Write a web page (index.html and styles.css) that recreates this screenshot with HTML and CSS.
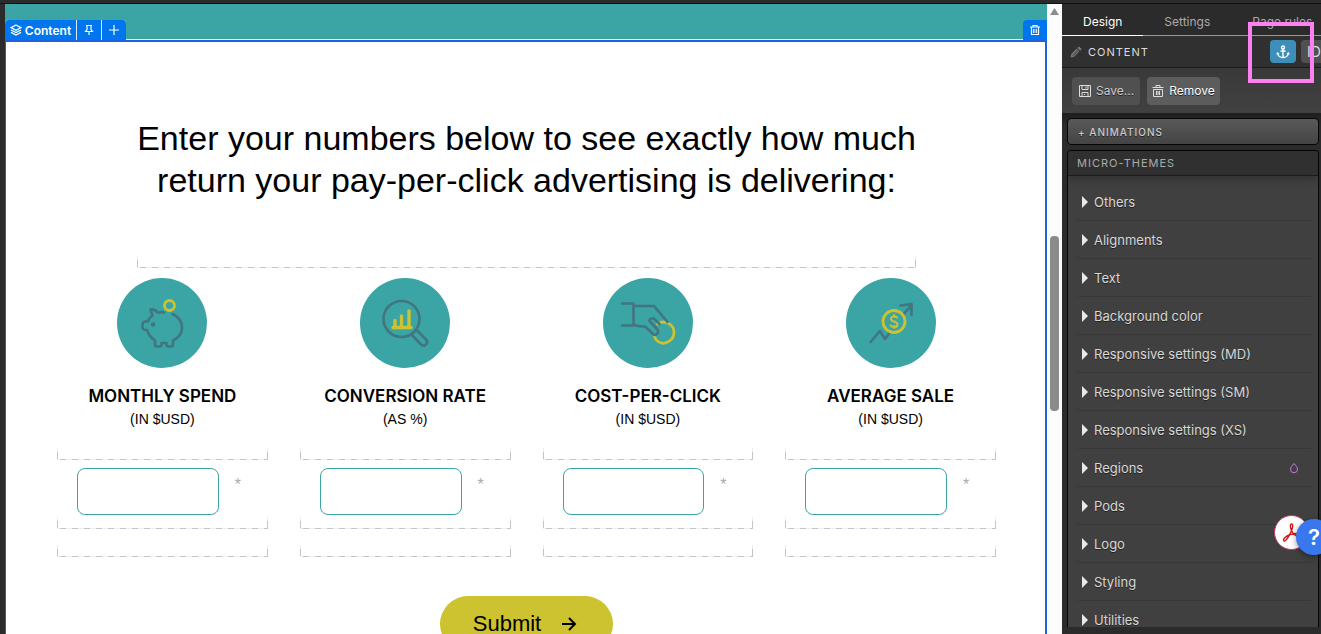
FILE: index.html
```html
<!DOCTYPE html>
<html lang="en">
<head>
    <meta charset="UTF-8">
    <meta name="viewport" content="width=device-width, initial-scale=1.0">
    <title>Page Editor</title>
    <link rel="stylesheet" href="styles.css">
</head>
<body>

<div class="topbar"></div>
<div class="editor">
    <main class="canvas">
        <div class="hero">
            <div class="block-tools">
                <button class="tool tool-name">
                    <svg width="12" height="12" viewBox="0 0 12 12"><path d="M6 1 11 3.600 6 6.200 1 3.600ZM1 6l5 2.600L11 6M1 8.400 6 11l5-2.600"/></svg>
                    Content
                </button>
                <button class="tool" aria-label="Pin">
                    <svg width="12" height="12" viewBox="0 0 12 12"><path d="M3 1.500h6M4 1.500v4L2.500 7.500h7L8 5.500v-4M6 7.500V11"/></svg>
                </button>
                <button class="tool" aria-label="Add">
                    <svg width="12" height="12" viewBox="0 0 12 12"><path d="M6 1v10M1 6h10"/></svg>
                </button>
            </div>
            <button class="tool tool-delete" aria-label="Delete">
                <svg width="12" height="12" viewBox="0 0 12 12"><path d="M1 3h10M4 3V1.500h4V3M2.500 3v7.500h7V3M4.800 5v4M7.200 5v4"/></svg>
            </button>
        </div>

        <form class="content">
            <h1>Enter your numbers below to see exactly how much<br>return your pay-per-click advertising is delivering:</h1>
            <div class="drop drop-wide"></div>

            <div class="fields">
                <div class="field">
                    <svg class="badge" viewBox="0 0 90 90">
                        <circle cx="45" cy="45" r="45" fill="#3ba4a5"/>
                        <g class="line">
                            <path d="M47 34.500C43 33.500 41 35 40.500 34.500 38.500 31.500 36 31 33.500 31.500L35.500 37.500C32.500 39.500 31.500 41 31 43.500 27.500 43 25.500 43.500 25.500 46.500v3c0 2 2 2.500 4.500 2.500 1.500 4.500 4 8 8 10.500v4c0 1.500 0 2 1.500 2h3c1.500 0 2-.5 2-2V65h5v1.500c0 1.500.5 2 2 2h2.500c1.500 0 2-.5 2-2v-4C62 59.500 65 55 65 50c0-6-3.500-11.500-9.500-14"/>
                            <circle cx="36" cy="46.500" r="1" fill="#417680"/>
                        </g>
                        <circle class="gold" cx="52.500" cy="27.500" r="5"/>
                    </svg>
                    <label for="spend">MONTHLY SPEND</label>
                    <p class="unit">(IN $USD)</p>
                    <div class="drop"></div>
                    <div class="entry"><input type="text" id="spend"><span class="required">*</span></div>
                    <div class="drop drop-under"></div>
                    <div class="drop drop-last"></div>
                </div>
                <div class="field">
                    <svg class="badge" viewBox="0 0 90 90">
                        <circle cx="45" cy="45" r="45" fill="#3ba4a5"/>
                        <g class="line">
                            <circle cx="41.500" cy="41" r="18"/>
                            <path d="M52 57l8.500 9c4 4 9-1 5-5L57 52.500"/>
                        </g>
                        <path class="gold gold-bars" d="M33 49.500h18M35 49v-6.500M41.500 49V38M49 49V33"/>
                    </svg>
                    <label for="rate">CONVERSION RATE</label>
                    <p class="unit">(AS %)</p>
                    <div class="drop"></div>
                    <div class="entry"><input type="text" id="rate"><span class="required">*</span></div>
                    <div class="drop drop-under"></div>
                    <div class="drop drop-last"></div>
                </div>
                <div class="field">
                    <svg class="badge" viewBox="0 0 90 90">
                        <circle cx="45" cy="45" r="45" fill="#3ba4a5"/>
                        <path class="gold" d="M54.500 46C62 41 71 46.500 71 54.500S61 68 55 63.500c-2-1.500-3-3-3.500-5"/>
                        <g class="line">
                            <path d="M19 25.500h11.500V47.500H19M31 28h20L64.500 44M31 46.500c4 2.500 7 2 11 2l7 6.500c4 4 8 0 5-4l-7.500-8c0-3 4-3.500 6-1l4 4"/>
                        </g>
                    </svg>
                    <label for="cost">COST-PER-CLICK</label>
                    <p class="unit">(IN $USD)</p>
                    <div class="drop"></div>
                    <div class="entry"><input type="text" id="cost"><span class="required">*</span></div>
                    <div class="drop drop-under"></div>
                    <div class="drop drop-last"></div>
                </div>
                <div class="field">
                    <svg class="badge" viewBox="0 0 90 90">
                        <circle cx="45" cy="45" r="45" fill="#3ba4a5"/>
                        <g class="line"><path d="M24.500 64l9.500-11 5 8 4.500-6M57 37l8.500-10M54.500 27.500l11-1.500v11"/></g>
                        <circle class="gold" cx="48" cy="43.500" r="11"/>
                        <path class="gold gold-thin" d="M51 39.500c-2-2-6-1.500-6 1.500s6.500 2 6.500 5.500c0 3-4.500 3.500-7 1M48.200 37v2M48.200 48v2"/>
                    </svg>
                    <label for="sale">AVERAGE SALE</label>
                    <p class="unit">(IN $USD)</p>
                    <div class="drop"></div>
                    <div class="entry"><input type="text" id="sale"><span class="required">*</span></div>
                    <div class="drop drop-under"></div>
                    <div class="drop drop-last"></div>
                </div>
            </div>

            <button type="button" class="submit">
                Submit
                <svg width="16" height="16" viewBox="0 0 16 16"><path d="M1 8h13M8 2l6 6-6 6"/></svg>
            </button>
        </form>
    </main>

    <div class="scrollbar">
        <svg width="9" height="7" viewBox="0 0 9 7"><path d="M4.500 0 9 7H0Z" fill="#8b8b8b"/></svg>
        <div class="thumb"></div>
    </div>

    <aside class="panel">
        <nav class="tabs">
            <button class="tab active">Design</button>
            <button class="tab">Settings</button>
            <button class="tab">Page rules</button>
        </nav>
        <div class="panel-title">
            <svg width="12" height="12" viewBox="0 0 12 12"><path d="M.5 11.500l.8-3.600L6.500 2.700l2.800 2.800L4.100 10.700ZM7.300 2l1.600-1.600L11.700 3.100l-1.600 1.600Z" fill="#777"/><path d="M3 9.500l4.500-4.500" stroke="#303030"/></svg>
            <h2>CONTENT</h2>
            <button class="chip chip-anchor" aria-label="Anchor">
                <svg width="14" height="14" viewBox="0 0 14 14"><circle cx="7" cy="2.500" r="1.500"/><path d="M7 4v8.500M4.500 6h5M1.500 8c.5 3 2.500 4.500 5.500 4.500s5-1.500 5.500-4.500M1 9.500 1.500 8l1.500 1M11 9l1.500-1 .5 1.500"/></svg>
            </button>
            <button class="chip">ID</button>
        </div>
        <div class="actions">
            <button class="action muted">
                <svg width="12" height="12" viewBox="0 0 12 12"><path d="M.5.500h11v11H.500ZM3 .500v4h6v-4M3 11.500v-4h6v4M7 1.500v2M5 9.500h1"/></svg>
                Save...
            </button>
            <button class="action">
                <svg width="12" height="12" viewBox="0 0 12 12"><path d="M.5 2.500h11M4 2.500v-2h4v2M1.500 4.500h9v7h-9ZM4.500 6v4M6 6v4M7.500 6v4"/></svg>
                Remove
            </button>
        </div>
        <div class="groups">
            <button class="animations">+ ANIMATIONS</button>
            <section class="themes">
                <h3>MICRO-THEMES</h3>
                <ul>
                    <li><button>Others</button></li>
                    <li><button>Alignments</button></li>
                    <li><button>Text</button></li>
                    <li><button>Background color</button></li>
                    <li><button>Responsive settings (MD)</button></li>
                    <li><button>Responsive settings (SM)</button></li>
                    <li><button>Responsive settings (XS)</button></li>
                    <li><button>Regions<svg class="drip" width="10" height="12" viewBox="0 0 10 12"><path d="M5 1.500C3 4 1.500 5.500 1.500 7.200a3.500 3.500 0 0 0 7 0C8.500 5.500 7 4 5 1.500Z"/></svg></button></li>
                    <li><button>Pods</button></li>
                    <li><button>Logo</button></li>
                    <li><button>Styling</button></li>
                    <li><button>Utilities</button></li>
                </ul>
            </section>
        </div>
    </aside>
</div>

<div class="highlight"></div>
<button class="float-pdf" aria-label="PDF">
    <svg width="20" height="20" viewBox="0 0 20 20"><path d="M9.500 1C8 1 8 4 9.500 7.500c1 2.500 4 6 7.500 5.500 2.500-.5 1.500-2.500-2-2.500-4 0-9 1.500-12 4-2.500 2.200-1.500 4.500.5 3C6 15.500 9.500 9 10.500 4.500 11 2 10.500 1 9.500 1Z"/></svg>
</button>
<button class="float-help">?</button>

</body>
</html>
```
FILE: styles.css
```css
* {
    box-sizing: border-box;
}
body {
    margin: 0;
    height: 100vh;
    display: flex;
    flex-direction: column;
    overflow: hidden;
    position: relative;
    background: #2b2b2b;
    font-family: Inter, sans-serif;
}
button {
    border: none;
    margin: 0;
    padding: 0;
    font: inherit;
    color: inherit;
    background: none;
    cursor: pointer;
}
svg {
    fill: none;
    flex-shrink: 0;
}
.topbar {
    height: 4px;
    background: #2b2b2b;
    border-bottom: 1px solid #111;
}
.editor {
    flex: 1;
    min-height: 0;
    display: flex;
    padding-left: 5px;
}

/* canvas */
.canvas {
    flex: 1;
    min-width: 0;
    display: flex;
    flex-direction: column;
    overflow: hidden;
    background: #fff;
    color: #000;
}
.hero {
    flex-shrink: 0;
    height: 36px;
    display: flex;
    justify-content: space-between;
    align-items: flex-end;
    background: #3ba4a5;
    box-shadow: inset 0 -1px #fff;
}
.block-tools {
    display: flex;
    gap: 1px;
    background: #dbeafe;
    border-radius: 4px 4px 0 0;
    overflow: hidden;
}
.tool {
    display: flex;
    align-items: center;
    justify-content: center;
    gap: 3px;
    width: 24px;
    height: 20px;
    background: #0076ee;
    color: #fff;
    font-size: 12px;
    font-weight: 600;
}
.tool svg {
    stroke: #fff;
    stroke-width: 1.2;
}
.tool-name {
    width: 71px;
}
.tool-delete {
    border-radius: 4px 0 0 0;
}
.content {
    flex: 1;
    display: flex;
    flex-direction: column;
    padding: 75px 49px 0 51px;
    border: solid #1f5fe0;
    border-width: 2px 2px 0 1px;
}
h1 {
    margin: 0;
    font: 400 34px/42px "Liberation Sans", Arial, sans-serif;
    text-align: center;
}
.drop {
    flex-shrink: 0;
    align-self: stretch;
    height: 12px;
    margin-top: 18px;
    background:
        repeating-linear-gradient(90deg, #eee 0 3px, #c4c4c4 3px 9px, #eee 9px 12px) bottom / 100% 1px no-repeat,
        linear-gradient(#eee 4px, #c4c4c4 4px) left / 1px 100% no-repeat,
        linear-gradient(#eee 4px, #c4c4c4 4px) right / 1px 100% no-repeat;
}
.drop-wide {
    margin: 55px 80px 0;
}
.fields {
    display: grid;
    grid-template-columns: repeat(4, minmax(0, 1fr));
    gap: 32px;
    margin-top: 10px;
}
.field {
    display: flex;
    flex-direction: column;
    align-items: center;
}
.badge {
    width: 90px;
    height: 90px;
}
.line {
    stroke: #417680;
    stroke-width: 2.6;
    stroke-linecap: round;
    stroke-linejoin: round;
}
.gold {
    stroke: #cdc22f;
    stroke-width: 2.8;
    stroke-linecap: round;
}
.gold-bars {
    stroke-width: 3.4;
}
.gold-thin {
    stroke-width: 2;
}
.field label {
    margin-top: 16px;
    font-size: 17px;
    font-weight: 600;
    line-height: 24px;
    white-space: nowrap;
}
.unit {
    margin: 0;
    font: 14px/22px "Liberation Sans", Arial, sans-serif;
}
.entry {
    align-self: stretch;
    display: flex;
    gap: 16px;
    margin-top: 8px;
    padding-left: 20px;
}
.entry input {
    flex: 1;
    min-width: 0;
    height: 47px;
    padding: 0 12px;
    border: 1px solid #3ba4a5;
    border-radius: 8px;
    font-size: 16px;
}
.required {
    width: 33px;
    padding-top: 7px;
    color: #aaa;
    font: 16px/20px "Liberation Sans", Arial, sans-serif;
}
.drop-under {
    margin-top: 2px;
}
.drop-last {
    margin-top: 16px;
}
.submit {
    align-self: center;
    flex-shrink: 0;
    display: flex;
    align-items: center;
    gap: 20px;
    height: 56px;
    margin-top: 39px;
    padding: 0 36px 0 33px;
    border-radius: 28px;
    background: #cdc22f;
    font: 22px "Liberation Sans", Arial, sans-serif;
}
.submit svg {
    stroke: #000;
    stroke-width: 2;
}

.scrollbar {
    width: 15px;
    padding-top: 4px;
    display: flex;
    flex-direction: column;
    align-items: center;
    background: #fcfcfc;
}
.thumb {
    width: 9px;
    height: 28%;
    margin-top: 221px;
    border-radius: 4px;
    background: #8b8b8b;
}

/* side panel */
.panel {
    width: 259px;
    display: flex;
    flex-direction: column;
    overflow: hidden;
    color: #ddd;
    font-size: 12px;
}
.tabs {
    display: flex;
    flex-shrink: 0;
    height: 32px;
    border-bottom: 1px solid #999;
}
.tab {
    flex-shrink: 0;
    height: 32px;
    padding: 4px 21px 0;
    border-bottom: 1px solid transparent;
    color: #aaa;
}
.tab.active {
    border-bottom-color: #fff;
    color: #fff;
}
.panel-title {
    flex-shrink: 0;
    display: flex;
    align-items: center;
    height: 32px;
    padding-left: 8px;
    background: #303030;
    border-bottom: 1px solid #1c1c1c;
}
h2 {
    flex: 1;
    margin: 0 0 0 6px;
    font-size: 11px;
    font-weight: 400;
    letter-spacing: 1px;
}
.chip {
    flex-shrink: 0;
    display: flex;
    align-items: center;
    justify-content: center;
    width: 26px;
    height: 23px;
    margin-right: 5px;
    border-radius: 4px;
    background: #505050;
    font-size: 14px;
}
.chip:last-child {
    margin-right: -6px;
}
.chip-anchor {
    background: #3d8fba;
}
.chip svg {
    stroke: #fff;
    stroke-width: 1.4;
}
.actions {
    flex-shrink: 0;
    display: flex;
    align-items: center;
    gap: 7px;
    height: 45px;
    padding-left: 10px;
    background: linear-gradient(#393939, #414141);
}
.action {
    display: flex;
    align-items: center;
    gap: 5px;
    height: 28px;
    padding: 0 5px;
    border-radius: 4px;
    background: #5c5c5c;
    color: #fff;
    text-shadow: 0 1px #222;
}
.action svg {
    stroke: #ddd;
}
.action.muted {
    padding: 0 6px 0 7px;
    background: #505050;
    color: #ccc;
}
.groups {
    flex: 1;
    min-height: 0;
    display: flex;
    flex-direction: column;
    gap: 5px;
    padding: 5px 2px 7px 5px;
    background: linear-gradient(#1e1e1e, #2b2b2b 12px);
}
.animations {
    flex-shrink: 0;
    height: 27px;
    padding-left: 10px;
    border: 1px solid #050505;
    border-radius: 4px;
    background: linear-gradient(#595959, #444);
    color: #ccc;
    font-size: 10px;
    font-weight: 500;
    letter-spacing: 1px;
    text-align: left;
    text-shadow: 0 1px #222;
}
.themes {
    flex: 1;
    min-height: 0;
    overflow: hidden;
    border: 1px solid #050505;
    border-bottom: none;
    border-radius: 4px 4px 0 0;
    background: #404040;
}
h3 {
    margin: 0;
    padding-left: 9px;
    border-bottom: 1px solid #1c1c1c;
    box-shadow: 0 2px 8px #2c2c2c;
    background: #303030;
    color: #aaa;
    font-size: 11px;
    font-weight: 400;
    line-height: 24px;
    letter-spacing: 1px;
}
.themes ul {
    margin: 0;
    padding: 7px 4px 0 8px;
    list-style: none;
}
.themes li button {
    display: flex;
    align-items: center;
    gap: 6px;
    width: 100%;
    height: 38px;
    padding-left: 6px;
    border-bottom: 1px solid #383838;
    border-radius: 4px;
    color: #d8d8d8;
    font-size: 13px;
    text-shadow: 0 1px #222;
}
.themes li button::before {
    content: "";
    border: solid transparent;
    border-width: 6px 0 6px 6px;
    border-left-color: #e8e8e8;
}
.drip {
    margin: 0 15px 0 auto;
    stroke: #c47be0;
}

/* things floating over the editor */
.highlight {
    position: absolute;
    top: 22px;
    right: 7px;
    width: 66px;
    height: 61px;
    border: 4px solid #ff80f0;
    pointer-events: none;
}
.float-pdf,
.float-help {
    position: absolute;
    display: flex;
    align-items: center;
    justify-content: center;
    border-radius: 50%;
}
.float-pdf {
    right: 12px;
    bottom: 84px;
    width: 35px;
    height: 35px;
    border: 1px solid #c2306c;
    background: #fff;
}
.float-pdf svg {
    stroke: #d01818;
    stroke-width: 1.4;
}
.float-help {
    right: -11px;
    bottom: 79px;
    width: 36px;
    height: 36px;
    background: #3877ee;
    box-shadow: 0 2px 6px #0006;
    color: #fff;
    font-size: 22px;
    font-weight: 600;
}
```
